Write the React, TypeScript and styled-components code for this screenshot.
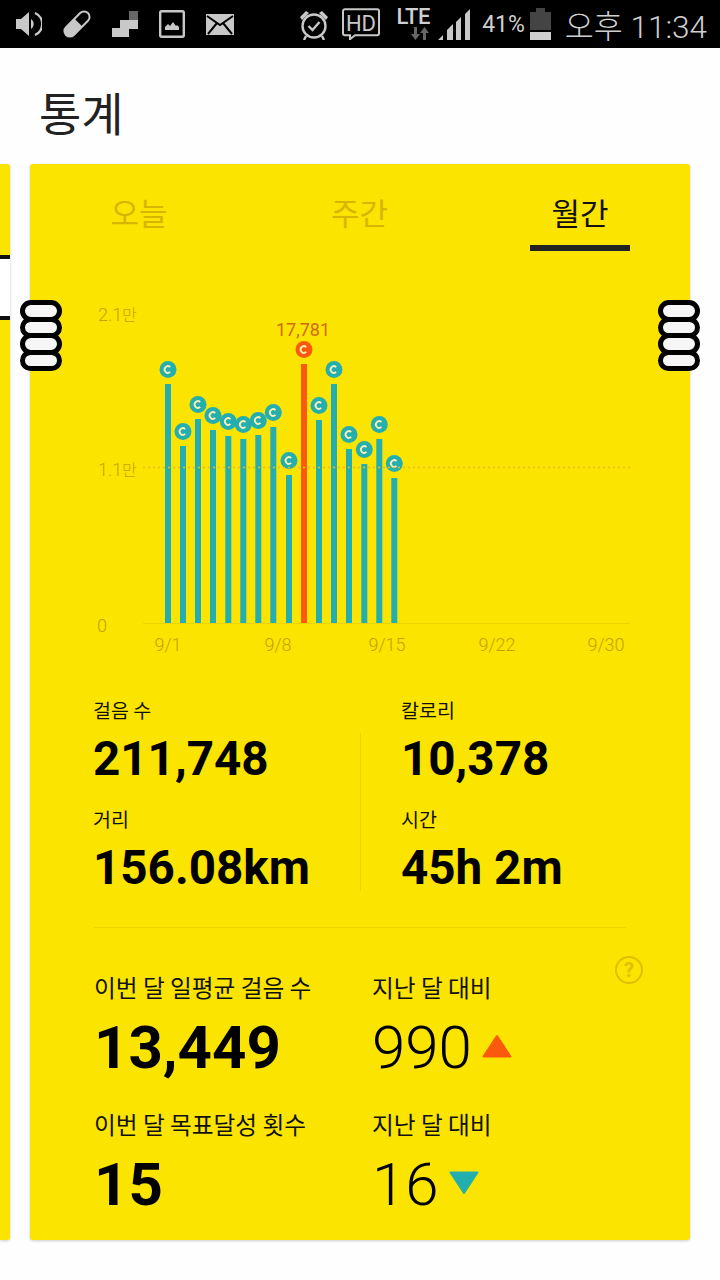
import styled, { createGlobalStyle } from "styled-components";

const YELLOW = "#fbe400";
const TEAL = "#24aeae";
const ORANGE = "#fb5a0c";
const AXIS = "#c2a300";

type Bar = { x: number; top: number; best?: boolean };

const bars: Bar[] = [
	{ x: 168, top: 384 },
	{ x: 183, top: 446 },
	{ x: 198, top: 419 },
	{ x: 213, top: 430 },
	{ x: 228.3, top: 436 },
	{ x: 243.3, top: 439 },
	{ x: 258.3, top: 435 },
	{ x: 273.3, top: 427 },
	{ x: 289, top: 475 },
	{ x: 304, top: 364, best: true },
	{ x: 319, top: 420 },
	{ x: 334, top: 384 },
	{ x: 349, top: 449 },
	{ x: 364.3, top: 464 },
	{ x: 379.3, top: 439 },
	{ x: 394.3, top: 478 },
];

const xLabels = [
	{ x: 168, text: "9/1" },
	{ x: 278, text: "9/8" },
	{ x: 387, text: "9/15" },
	{ x: 497, text: "9/22" },
	{ x: 606, text: "9/30" },
];

const GlobalStyle = createGlobalStyle`
	html, body {
		margin: 0;
		padding: 0;
		background: #fefefe;
	}
	body {
		font-family: Roboto, "Noto Sans CJK KR", sans-serif;
	}
`;

function StatusIcons() {
	return (
		<>
			<svg width="26" height="26" viewBox="0 0 26 26">
				<path d="M0 8h5l8-7v24l-8-7H0z" fill="#c8c8c8" />
				<path d="M15 8a6 6 0 0 1 0 10z" fill="#c8c8c8" />
				<path d="M19 2a12 12 0 0 1 0 22" fill="none" stroke="#c8c8c8" strokeWidth="2.4" />
			</svg>
			<svg width="28" height="28" viewBox="0 0 28 28">
				<g transform="rotate(45 14 14)">
					<rect x="7.5" y="-2.5" width="13" height="33" rx="6.5" fill="#c8c8c8" />
					<path d="M9.5 12V4a4.5 4.5 0 0 1 9 0v8z" fill="#000" />
				</g>
			</svg>
			<svg width="26" height="26" viewBox="0 0 26 26">
				<path d="M0 17h8v-8h9v-1h9v10h-9v8H0z" fill="#c8c8c8" />
				<rect x="17" y="0" width="9" height="9" fill="#666" />
			</svg>
			<svg width="26" height="28" viewBox="0 0 26 28">
				<rect x="1.2" y="1.2" width="23.6" height="25.6" rx="1.5" fill="none" stroke="#c8c8c8" strokeWidth="2.4" />
				<path d="M6 20v-3l3-3 2 2 3-4 3 4 1-1 2 2v3z" fill="#c8c8c8" />
			</svg>
			<svg width="28" height="21" viewBox="0 0 28 21">
				<rect width="28" height="21" fill="#c8c8c8" />
				<path d="M1 2l13 9 13-9M2 20l9-11M26 20l-9-11" fill="none" stroke="#000" strokeWidth="2" />
			</svg>
		</>
	);
}

function NetworkIcons() {
	return (
		<>
			<svg width="30" height="31" viewBox="0 0 30 31">
				<circle cx="15" cy="17" r="11.5" fill="none" stroke="#c8c8c8" strokeWidth="2.4" />
				<path d="M9.5 17l4 4 7-8" fill="none" stroke="#c8c8c8" strokeWidth="2.4" />
				<path d="M1 8l6-6 3 2-7 7zM29 8l-6-6-3 2 7 7z" fill="#c8c8c8" />
				<path d="M7 27l-2 4M23 27l2 4" stroke="#c8c8c8" strokeWidth="2.4" />
			</svg>
			<svg width="38" height="32" viewBox="0 0 38 32">
				<path d="M3 1.2h32a2 2 0 0 1 2 2v22a2 2 0 0 1-2 2H13l-5 4v-4H3a2 2 0 0 1-2-2v-22a2 2 0 0 1 2-2z" fill="none" stroke="#c8c8c8" strokeWidth="2" />
				<text x="19" y="22.5" textAnchor="middle" fontFamily="Roboto, sans-serif" fontSize="22" fill="#c8c8c8">HD</text>
			</svg>
			<LteBox>
				<LteText>LTE</LteText>
				<svg width="20" height="13" viewBox="0 0 20 13">
					<path d="M4 0h3v7h3l-4.500 6L1 7h3zM13 13h3V6h3l-4.500-6L10 6h3z" fill="#666" />
				</svg>
			</LteBox>
			<svg width="32" height="31" viewBox="0 0 32 31">
				<path d="M0 31l5-5v5zM9 31V21l6-6v16zM18 31V13l5-5v23zM27 31V5l5-5v31z" fill="#c8c8c8" />
			</svg>
		</>
	);
}

function Handle({ side }: { side: "left" | "right" }) {
	return (
		<HandleStack $side={side}>
			<Pill />
			<Pill />
			<Pill />
			<Pill />
		</HandleStack>
	);
}

function Chart() {
	return (
		<ChartSvg width="660" height="375" viewBox="30 290 660 375">
			<g fontFamily="Roboto, sans-serif" fontSize="18" fontWeight="300" fill={AXIS}>
				<text x="98" y="321">2.1</text>
				<text x="98" y="476">1.1</text>
				<text x="97" y="632">0</text>
				{xLabels.map((l) => (
					<text key={l.text} x={l.x} y="651" textAnchor="middle">
						{l.text}
					</text>
				))}
			</g>
			<g fontFamily="'Noto Sans CJK KR', sans-serif" fontSize="16" fontWeight="300" fill={AXIS}>
				<text x="122" y="321">만</text>
				<text x="122" y="476">만</text>
			</g>
			<line x1="143" y1="623.500" x2="630" y2="623.500" stroke="#eed300" />
			{bars.map((b) => {
				const color = b.best ? ORANGE : TEAL;
				const cy = b.top - 14.5;
				return (
					<g key={b.x}>
						<rect x={b.x - 3} y={b.top} width="6" height={623 - b.top} fill={color} />
						<circle cx={b.x} cy={cy} r="8.5" fill={color} />
						<path
							d={`M${b.x + 2.2} ${cy - 2.4}a3.300 3.300 0 1 0 0 4.800`}
							fill="none"
							stroke="#f8f0b8"
							strokeWidth="1.800"
						/>
					</g>
				);
			})}
			<line x1="143" y1="467.500" x2="630" y2="467.500" stroke="#e9bd1c" strokeWidth="1.500" strokeDasharray="2 3" />
			<text x="303" y="336" textAnchor="middle" fontFamily="Roboto, sans-serif" fontSize="18" fill="#cf6a12">
				17,781
			</text>
		</ChartSvg>
	);
}

function App() {
	return (
		<Page>
			<GlobalStyle />
			<StatusBar>
				<StatusGroup>
					<StatusIcons />
				</StatusGroup>
				<StatusRight>
					<NetworkIcons />
					<BatteryPercent>41%</BatteryPercent>
					<Battery />
					<Clock>오후 11:34</Clock>
				</StatusRight>
			</StatusBar>
			<Header>
				<Title>통계</Title>
			</Header>
			<Carousel>
				<PeekCard>
					<PeekBand />
				</PeekCard>
				<Card>
					<Tabs>
						<Tab>오늘</Tab>
						<Tab>주간</Tab>
						<Tab $active>월간</Tab>
					</Tabs>
					<Chart />
					<Totals>
						<TotalsColumn $divider>
							<Stat>
								<StatLabel>걸음 수</StatLabel>
								<StatValue>211,748</StatValue>
							</Stat>
							<Stat>
								<StatLabel>거리</StatLabel>
								<StatValue>156.08km</StatValue>
							</Stat>
						</TotalsColumn>
						<TotalsColumn>
							<Stat>
								<StatLabel>칼로리</StatLabel>
								<StatValue>10,378</StatValue>
							</Stat>
							<Stat>
								<StatLabel>시간</StatLabel>
								<StatValue>45h 2m</StatValue>
							</Stat>
						</TotalsColumn>
					</Totals>
					<Rule />
					<Monthly>
						<HelpBadge>?</HelpBadge>
						<MonthCell>
							<MonthLabel>이번 달 일평균 걸음 수</MonthLabel>
							<MonthValue>13,449</MonthValue>
						</MonthCell>
						<MonthCell>
							<MonthLabel>지난 달 대비</MonthLabel>
							<CompareRow>
								<CompareValue>990</CompareValue>
								<Arrow viewBox="0 0 30 24" width="30" height="24">
									<path d="M15 2L28.500 22.500H1.500z" fill={ORANGE} stroke={ORANGE} strokeWidth="2" strokeLinejoin="round" />
								</Arrow>
							</CompareRow>
						</MonthCell>
						<MonthCell>
							<MonthLabel>이번 달 목표달성 횟수</MonthLabel>
							<MonthValue>15</MonthValue>
						</MonthCell>
						<MonthCell>
							<MonthLabel>지난 달 대비</MonthLabel>
							<CompareRow>
								<CompareValue>16</CompareValue>
								<Arrow viewBox="0 0 30 24" width="30" height="24">
									<path d="M15 22L28.500 1.500H1.500z" fill={TEAL} stroke={TEAL} strokeWidth="2" strokeLinejoin="round" />
								</Arrow>
							</CompareRow>
						</MonthCell>
					</Monthly>
				</Card>
			</Carousel>
			<Handle side="left" />
			<Handle side="right" />
		</Page>
	);
}

const Page = styled.div`
	position: relative;
	width: 720px;
	height: 1280px;
	overflow: hidden;
	background: #fefefe;
`;

const StatusBar = styled.div`
	height: 48px;
	background: #000;
	display: flex;
	justify-content: space-between;
	align-items: center;
	padding: 0 13px 0 16px;
	box-sizing: border-box;
`;

const StatusGroup = styled.div`
	display: flex;
	align-items: center;
	gap: 21px;
`;

const StatusRight = styled.div`
	display: flex;
	align-items: center;
	color: #d0d0d0;
	svg:nth-child(2) {
		margin-left: 13px;
	}
	svg:nth-child(4) {
		margin-left: 7px;
	}
`;

const LteBox = styled.div`
	width: 36px;
	margin-left: 15px;
	margin-top: -2px;
	display: flex;
	flex-direction: column;
	align-items: center;
`;

const LteText = styled.span`
	font-size: 22px;
	line-height: 21px;
	font-weight: 500;
	letter-spacing: -0.5px;
`;

const BatteryPercent = styled.span`
	font-size: 23px;
	margin-left: 12px;
	font-weight: 400;
`;

const Battery = styled.div`
	position: relative;
	width: 21px;
	height: 28px;
	margin: 4px 0 0 5px;
	background: linear-gradient(#444 0 18px, #000 18px 20px, #cfcfcf 20px);
	&::before {
		content: "";
		position: absolute;
		top: -4px;
		left: 6px;
		width: 9px;
		height: 4px;
		background: #444;
	}
`;

const Clock = styled.span`
	font-size: 31.500px;
	font-weight: 300;
	margin-left: 14px;
`;

const Header = styled.header`
	height: 116px;
	padding: 35px 0 0 39px;
	box-sizing: border-box;
`;

const Title = styled.h1`
	margin: 0;
	font-size: 46px;
	line-height: 56px;
	font-weight: 400;
	color: #222;
	font-family: "Noto Sans CJK KR", sans-serif;
`;

const Carousel = styled.div`
	display: flex;
	gap: 20px;
	height: 1076px;
`;

const PeekCard = styled.div`
	width: 10px;
	padding-top: 91px;
	box-sizing: border-box;
	background: ${YELLOW};
	border-radius: 0 3px 3px 0;
	box-shadow: 0 1px 3px rgba(0, 0, 0, 0.2);
`;

const PeekBand = styled.div`
	height: 65px;
	box-sizing: border-box;
	background: #fff;
	border-top: 4px solid #111;
	border-bottom: 4px solid #111;
`;

const Card = styled.section`
	width: 660px;
	padding-top: 29px;
	box-sizing: border-box;
	background: ${YELLOW};
	border-radius: 3px;
	box-shadow: 0 1px 3px rgba(0, 0, 0, 0.2);
`;

const Tabs = styled.div`
	display: flex;
	justify-content: space-between;
	padding: 0 60px 0 59px;
`;

const Tab = styled.div<{ $active?: boolean }>`
	width: 100px;
	height: 58px;
	box-sizing: border-box;
	display: flex;
	align-items: center;
	justify-content: center;
	font-family: "Noto Sans CJK KR", sans-serif;
	font-size: 31px;
	padding-bottom: 15px;
	color: ${(p) => (p.$active ? "#111" : "#d6b600")};
	border-bottom: 6px solid ${(p) => (p.$active ? "#222" : "transparent")};
`;

const ChartSvg = styled.svg`
	display: block;
	margin-top: 39px;
`;

const Totals = styled.div`
	display: grid;
	grid-template-columns: 266px 1fr;
	margin: 32px 0 0 64px;
`;

const TotalsColumn = styled.div<{ $divider?: boolean }>`
	position: relative;
	display: flex;
	flex-direction: column;
	gap: 10px;
	padding-left: ${(p) => (p.$divider ? "0" : "42px")};
	${(p) =>
		p.$divider &&
		`&::after {
			content: "";
			position: absolute;
			right: -1px;
			top: 36px;
			bottom: 14px;
			width: 1px;
			background: #eed300;
		}`}
`;

const Stat = styled.div`
	display: flex;
	flex-direction: column;
`;

const StatLabel = styled.span`
	font-family: "Noto Sans CJK KR", sans-serif;
	font-size: 19.5px;
	line-height: 26px;
	color: #111;
	margin-left: -1px;
`;

const StatValue = styled.span`
	font-size: 47.600px;
	line-height: 73px;
	font-weight: 700;
	color: #000;
	margin-left: -1px;
`;

const Rule = styled.hr`
	margin: 22px 64px 0 64px;
	border: 0;
	height: 1px;
	background: #eed300;
`;

const Monthly = styled.div`
	position: relative;
	display: grid;
	grid-template-columns: 278px 1fr;
	row-gap: 18px;
	margin: 40px 0 0 64px;
`;

const HelpBadge = styled.span`
	position: absolute;
	right: 47px;
	top: -12px;
	width: 28px;
	height: 28px;
	box-sizing: border-box;
	border: 2px solid #dfc000;
	border-radius: 50%;
	color: #dfc000;
	font-size: 20px;
	font-weight: 700;
	line-height: 24px;
	text-align: center;
`;

const MonthCell = styled.div`
	display: flex;
	flex-direction: column;
`;

const MonthLabel = styled.span`
	font-family: "Noto Sans CJK KR", sans-serif;
	font-size: 23.7px;
	line-height: 38px;
	color: #111;
`;

const MonthValue = styled.span`
	font-size: 60px;
	line-height: 78px;
	margin-top: 3px;
	font-weight: 700;
	color: #000;
`;

const CompareRow = styled.div`
	display: flex;
	align-items: center;
	gap: 10px;
	height: 78px;
	margin-top: 3px;
`;

const CompareValue = styled.span`
	font-size: 60px;
	line-height: 78px;
	font-weight: 300;
	color: #000;
`;

const Arrow = styled.svg`
	display: block;
	margin-bottom: 5px;
`;

const HandleStack = styled.div<{ $side: "left" | "right" }>`
	position: absolute;
	top: 300px;
	${(p) => (p.$side === "left" ? "left: 20px;" : "right: 20px;")}
	width: 42px;
	display: flex;
	flex-direction: column;
`;

const Pill = styled.div`
	height: 21.500px;
	box-sizing: border-box;
	border: 5px solid #000;
	border-radius: 11px;
	background: #f6f6f6;
	& + & {
		margin-top: -5px;
	}
`;

export default App;
